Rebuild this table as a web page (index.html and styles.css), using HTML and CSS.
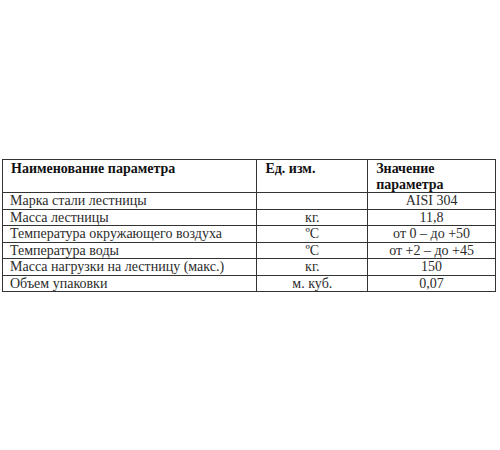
FILE: index.html
```html
<!DOCTYPE html>
<html>
<head>
<meta charset="utf-8">
<link rel="stylesheet" href="styles.css">
</head>
<body>
<div class="page">
<table class="spec">
  <colgroup>
    <col class="c1"><col class="c2"><col class="c3">
  </colgroup>
  <tbody>
    <tr class="head">
      <td class="h">Наименование параметра</td>
      <td class="h">Ед. изм.</td>
      <td class="h">Значение<br>параметра</td>
    </tr>
    <tr><td>Марка стали лестницы</td><td class="c"></td><td class="c">AISI 304</td></tr>
    <tr><td>Масса лестницы</td><td class="c">кг.</td><td class="c">11,8</td></tr>
    <tr><td>Температура окружающего воздуха</td><td class="c">ºС</td><td class="c">от 0 – до +50</td></tr>
    <tr><td>Температура воды</td><td class="c">ºС</td><td class="c">от +2 – до +45</td></tr>
    <tr><td>Масса нагрузки на лестницу (макс.)</td><td class="c">кг.</td><td class="c">150</td></tr>
    <tr><td>Объем упаковки</td><td class="c">м. куб.</td><td class="c">0,07</td></tr>
  </tbody>
</table>
</div>
</body>
</html>
```

FILE: styles.css
```css
html, body {
  margin: 0;
  padding: 0;
  background: #ffffff;
}
.page {
  width: 500px;
  height: 450px;
  padding: 159px 0 0 2px;
  box-sizing: border-box;
}
.spec {
  border-collapse: collapse;
  width: 494px;
  font-family: "Liberation Serif", "Times New Roman", serif;
  font-size: 14px;
  color: #2b2b2b;
}
.c1 { width: 255px; }
.c2 { width: 111px; }
.c3 { width: 128px; }
.spec td {
  border: 1px solid #333;
  padding: 0 0 0 7px;
  line-height: 15.5px;
  vertical-align: top;
  text-align: left;
}
.spec td.h {
  font-weight: 700;
  color: #111;
  height: 31px;
  padding-top: 1px;
  padding-left: 8px;
}
.spec td.c {
  text-align: center;
  padding-left: 0;
}
```
